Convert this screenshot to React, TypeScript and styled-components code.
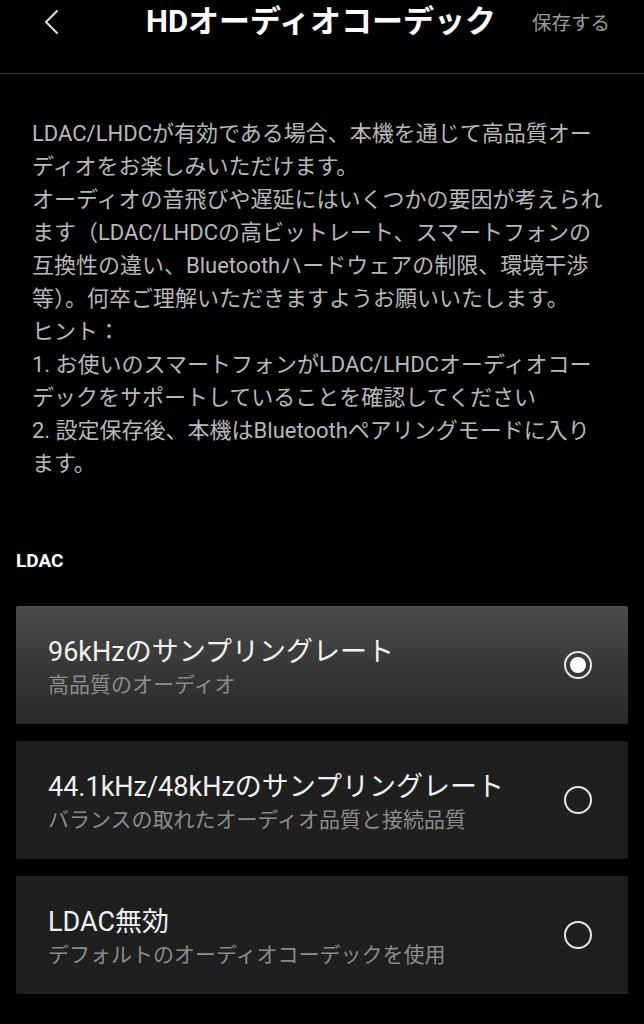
import React, { useState } from "react";
import styled, { createGlobalStyle } from "styled-components";

const GlobalStyle = createGlobalStyle`
  html, body {
    margin: 0;
    padding: 0;
    background: #000;
  }
  body {
    font-family: "Roboto", "Noto Sans CJK JP", sans-serif;
    color: #fff;
  }
  * {
    box-sizing: border-box;
  }
`;

const Page = styled.div`
  width: 644px;
  min-height: 1024px;
  background: #000;
  overflow: hidden;
`;

const Header = styled.header`
  height: 74px;
  border-bottom: 1px solid #3a3a3a;
  display: grid;
  grid-template-columns: 120px 1fr 120px;
  align-items: start;
  padding-top: 2px;
`;

const BackButton = styled.button`
  background: none;
  border: none;
  padding: 0;
  margin: 6px 0 0 40px;
  width: 22px;
  height: 28px;
  cursor: pointer;
  display: flex;
  align-items: center;
  justify-content: center;
`;

const Title = styled.h1`
  margin: 0 0 0 -2px;
  text-align: center;
  font-size: 31px;
  font-weight: 700;
  line-height: 40px;
  color: #fff;
  white-space: nowrap;
`;

const SaveButton = styled.button`
  background: none;
  border: none;
  padding: 0;
  margin: 8px 0 0 8px;
  justify-self: start;
  font-family: inherit;
  font-size: 19.5px;
  line-height: 28px;
  color: #9a9a9a;
  white-space: nowrap;
  cursor: pointer;
`;

const Description = styled.div`
  padding: 43px 32px 0 32px;
  font-size: 22px;
  line-height: 33px;
  color: #b8b8b8;
`;

const Line = styled.span`
  display: block;
  white-space: nowrap;
`;

const SectionLabel = styled.h2`
  margin: 68px 0 0 16px;
  font-size: 19px;
  font-weight: 700;
  line-height: 26px;
  color: #fff;
`;

const OptionList = styled.div`
  display: flex;
  flex-direction: column;
  gap: 17px;
  padding: 32px 16px 0 16px;
`;

const OptionCard = styled.div<{ $active: boolean }>`
  height: 118px;
  border-radius: 2px;
  background: ${(p) =>
    p.$active
      ? "linear-gradient(180deg, #4c4c4c 0%, #363636 55%, #2a2a2a 100%)"
      : "#1f1f1f"};
  display: flex;
  align-items: center;
  padding: 4px 36px 0 32px;
  cursor: pointer;
`;

const OptionText = styled.div`
  flex: 1;
  display: flex;
  flex-direction: column;
`;

const OptionTitle = styled.div`
  font-size: 27px;
  line-height: 35px;
  color: #f2f2f2;
  white-space: nowrap;
`;

const OptionSub = styled.div`
  font-size: 21px;
  line-height: 30px;
  color: #8c8c8c;
  white-space: nowrap;
`;

const Radio = styled.div<{ $checked: boolean }>`
  width: 28px;
  height: 28px;
  border-radius: 50%;
  border: 2px solid #e6e6e6;
  display: flex;
  align-items: center;
  justify-content: center;
  flex-shrink: 0;
  margin-top: -4px;

  &::after {
    content: "";
    width: 16px;
    height: 16px;
    border-radius: 50%;
    background: #fff;
    display: ${(p) => (p.$checked ? "block" : "none")};
  }
`;

const descLines = [
  "LDAC/LHDCが有効である場合、本機を通じて高品質オー",
  "ディオをお楽しみいただけます。",
  "オーディオの音飛びや遅延にはいくつかの要因が考えられ",
  "ます（LDAC/LHDCの高ビットレート、スマートフォンの",
  "互換性の違い、Bluetoothハードウェアの制限、環境干渉",
  "等）。何卒ご理解いただきますようお願いいたします。",
  "ヒント：",
  "1. お使いのスマートフォンがLDAC/LHDCオーディオコー",
  "デックをサポートしていることを確認してください",
  "2. 設定保存後、本機はBluetoothペアリングモードに入り",
  "ます。",
];

const options = [
  { title: "96kHzのサンプリングレート", sub: "高品質のオーディオ" },
  {
    title: "44.1kHz/48kHzのサンプリングレート",
    sub: "バランスの取れたオーディオ品質と接続品質",
  },
  { title: "LDAC無効", sub: "デフォルトのオーディオコーデックを使用" },
];

const App = () => {
  const [selected, setSelected] = useState(0);

  return (
    <Page>
      <GlobalStyle />
      <Header>
        <BackButton aria-label="戻る">
          <svg width="16" height="26" viewBox="0 0 16 26" fill="none">
            <polyline
              points="14,2 3,13 14,24"
              stroke="#e0e0e0"
              strokeWidth="2"
              strokeLinecap="round"
              strokeLinejoin="round"
            />
          </svg>
        </BackButton>
        <Title>HDオーディオコーデック</Title>
        <SaveButton>保存する</SaveButton>
      </Header>

      <Description>
        {descLines.map((l, i) => (
          <Line key={i}>{l}</Line>
        ))}
      </Description>

      <SectionLabel>LDAC</SectionLabel>

      <OptionList>
        {options.map((o, i) => (
          <OptionCard
            key={i}
            $active={selected === i}
            onClick={() => setSelected(i)}
          >
            <OptionText>
              <OptionTitle>{o.title}</OptionTitle>
              <OptionSub>{o.sub}</OptionSub>
            </OptionText>
            <Radio $checked={selected === i} />
          </OptionCard>
        ))}
      </OptionList>
    </Page>
  );
};

export default App;
